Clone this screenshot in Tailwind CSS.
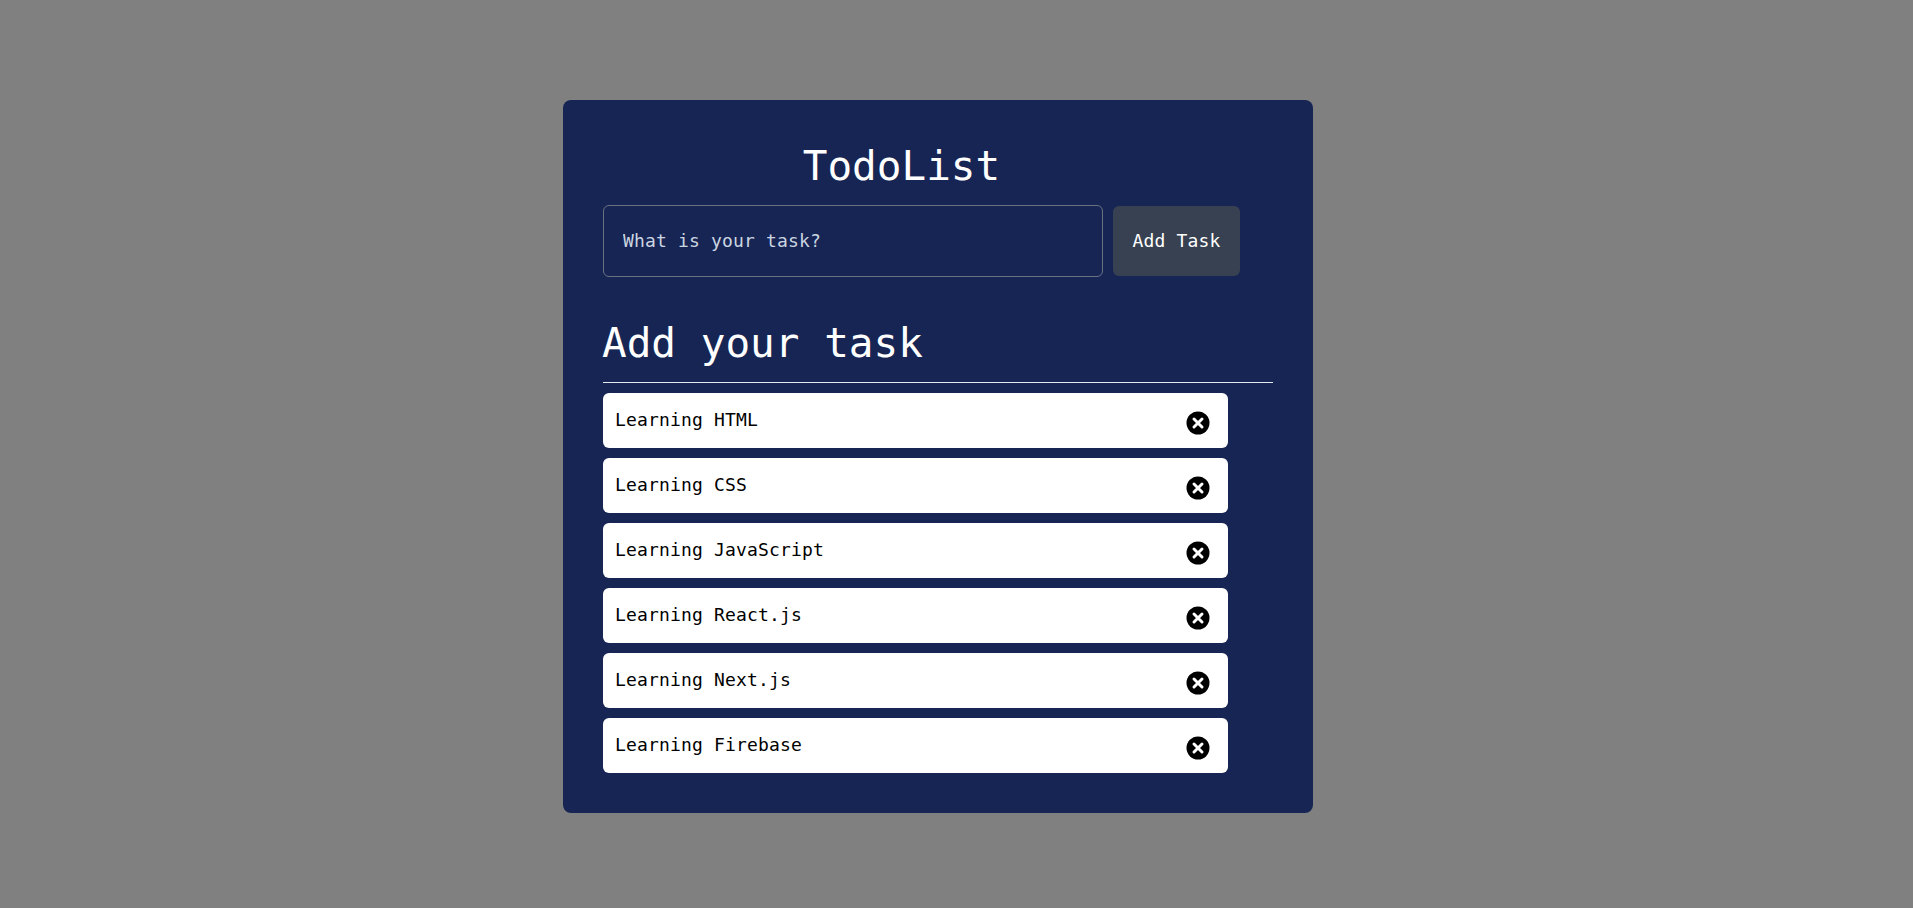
<!DOCTYPE html>
<html lang="en">
<head>
    <meta charset="UTF-8">
    <title>TodoList</title>
    <script src="https://cdn.jsdelivr.net/npm/@tailwindcss/browser@4"></script>
</head>
<body class="bg-[#808080] font-['DejaVu_Sans_Mono',monospace] h-[908px] overflow-hidden">

    <main class="pt-[100px] pl-[563px]">
        <div class="w-[750px] h-[713px] bg-[#172554] rounded-lg px-10 pt-[42px]">
            <h1 class="w-[597px] h-[63px] text-center text-[41px] leading-[48px] text-white">TodoList</h1>

            <form class="flex items-center gap-[10px] h-[72px]">
                <input type="text" placeholder="What is your task?" class="w-[500px] h-[72px] pl-[19px] pb-[2px] bg-transparent border border-gray-500 rounded-md text-[18px] tracking-[0.16px] text-white placeholder:text-[#cbd5e1] outline-none">
                <button type="button" class="w-[127px] h-[70px] pb-[2px] bg-[#374151] rounded-md text-[18px] tracking-[0.16px] text-white">Add Task</button>
            </form>

            <h2 class="mt-[42px] h-[63px] indent-[-1px] text-[41px] leading-[48px] text-white border-b border-white/90 box-content">Add your task</h2>

            <ul class="mt-[10px] w-[625px] flex flex-col gap-[10px]">
                <li class="h-[55px] bg-white rounded-md pl-[12px] pr-[18px] flex justify-between items-center text-[18px] tracking-[0.16px] text-black">
                    <span class="-mt-[2px]">Learning HTML</span>
                    <svg class="w-[24px] h-[24px] mt-[5px]" viewBox="0 0 24 24"><circle cx="12" cy="12" r="11.5" fill="#000"/><path d="M8 8l8 8M16 8l-8 8" stroke="#fff" stroke-width="3" stroke-linecap="round"/></svg>
                </li>
                <li class="h-[55px] bg-white rounded-md pl-[12px] pr-[18px] flex justify-between items-center text-[18px] tracking-[0.16px] text-black">
                    <span class="-mt-[2px]">Learning CSS</span>
                    <svg class="w-[24px] h-[24px] mt-[5px]" viewBox="0 0 24 24"><circle cx="12" cy="12" r="11.5" fill="#000"/><path d="M8 8l8 8M16 8l-8 8" stroke="#fff" stroke-width="3" stroke-linecap="round"/></svg>
                </li>
                <li class="h-[55px] bg-white rounded-md pl-[12px] pr-[18px] flex justify-between items-center text-[18px] tracking-[0.16px] text-black">
                    <span class="-mt-[2px]">Learning JavaScript</span>
                    <svg class="w-[24px] h-[24px] mt-[5px]" viewBox="0 0 24 24"><circle cx="12" cy="12" r="11.5" fill="#000"/><path d="M8 8l8 8M16 8l-8 8" stroke="#fff" stroke-width="3" stroke-linecap="round"/></svg>
                </li>
                <li class="h-[55px] bg-white rounded-md pl-[12px] pr-[18px] flex justify-between items-center text-[18px] tracking-[0.16px] text-black">
                    <span class="-mt-[2px]">Learning React.js</span>
                    <svg class="w-[24px] h-[24px] mt-[5px]" viewBox="0 0 24 24"><circle cx="12" cy="12" r="11.5" fill="#000"/><path d="M8 8l8 8M16 8l-8 8" stroke="#fff" stroke-width="3" stroke-linecap="round"/></svg>
                </li>
                <li class="h-[55px] bg-white rounded-md pl-[12px] pr-[18px] flex justify-between items-center text-[18px] tracking-[0.16px] text-black">
                    <span class="-mt-[2px]">Learning Next.js</span>
                    <svg class="w-[24px] h-[24px] mt-[5px]" viewBox="0 0 24 24"><circle cx="12" cy="12" r="11.5" fill="#000"/><path d="M8 8l8 8M16 8l-8 8" stroke="#fff" stroke-width="3" stroke-linecap="round"/></svg>
                </li>
                <li class="h-[55px] bg-white rounded-md pl-[12px] pr-[18px] flex justify-between items-center text-[18px] tracking-[0.16px] text-black">
                    <span class="-mt-[2px]">Learning Firebase</span>
                    <svg class="w-[24px] h-[24px] mt-[5px]" viewBox="0 0 24 24"><circle cx="12" cy="12" r="11.5" fill="#000"/><path d="M8 8l8 8M16 8l-8 8" stroke="#fff" stroke-width="3" stroke-linecap="round"/></svg>
                </li>
            </ul>
        </div>
    </main>

</body>
</html>
